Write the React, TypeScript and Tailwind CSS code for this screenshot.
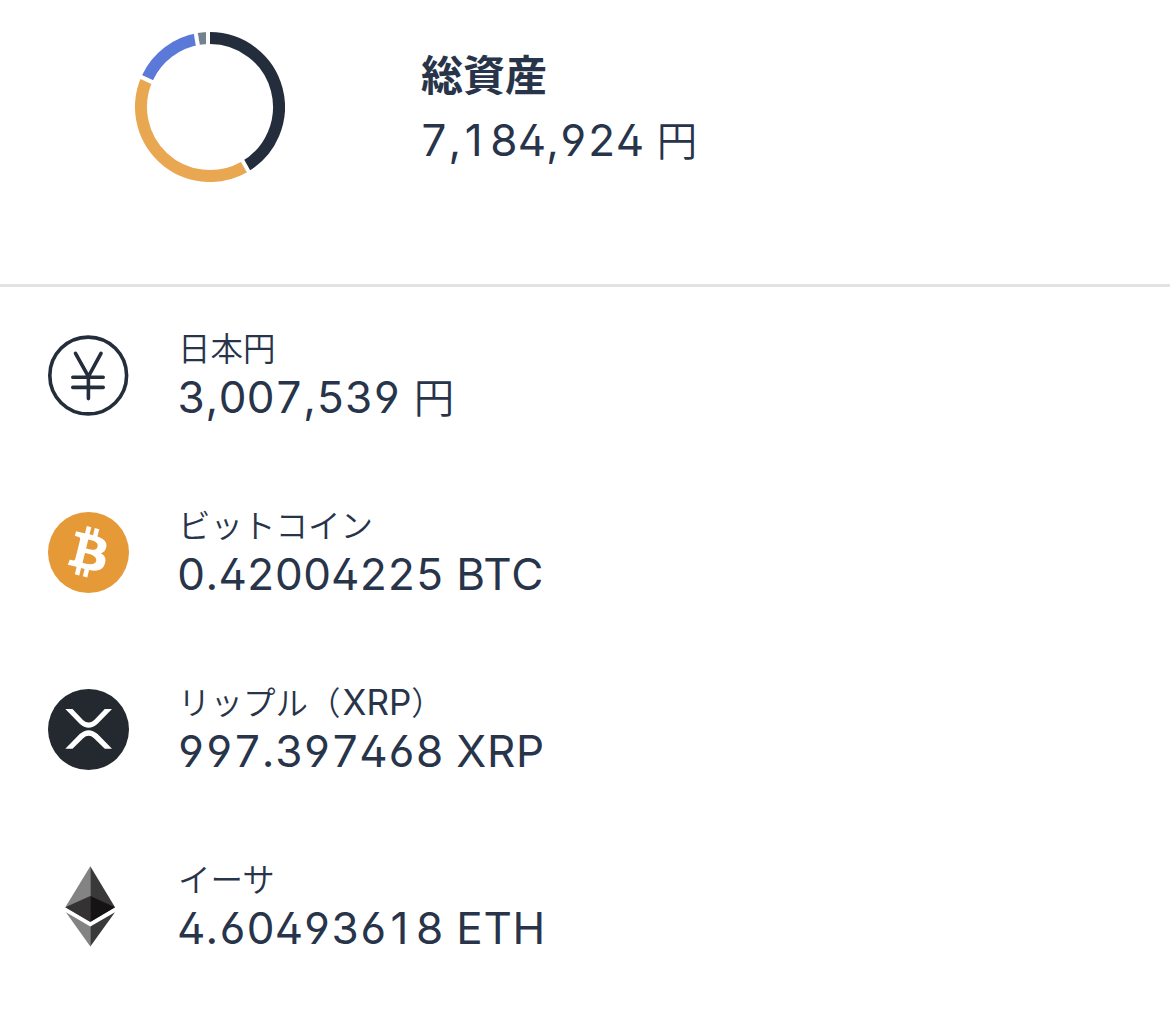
import type { ReactNode } from "react";

const segments = [
  { color: "#242d3c", from: 0, to: 150.7 },
  { color: "#e9a752", from: 150.7, to: 295.1 },
  { color: "#5b79d9", from: 295.1, to: 350.6 },
  { color: "#74828f", from: 350.6, to: 360 },
];

function arc(from: number, to: number) {
  const point = (deg: number) => {
    const a = (deg * Math.PI) / 180;
    return `${75 + 69 * Math.sin(a)} ${75 - 69 * Math.cos(a)}`;
  };
  return `M${point(from)}A69 69 0 0 1 ${point(to)}`;
}

function Donut() {
  return (
    <svg className="h-[150px] w-[150px]" viewBox="0 0 150 150" fill="none">
      {segments.map((s) => (
        <path key={s.color} d={arc(s.from, s.to)} stroke={s.color} strokeWidth="12" />
      ))}
      {segments.map((s) => (
        <rect key={s.from} x="71" y="-1" width="4" height="16" fill="#fff" transform={`rotate(${s.from} 75 75)`} />
      ))}
    </svg>
  );
}

function YenIcon() {
  return (
    <svg className="h-[82px] w-[82px]" viewBox="0 0 82 82" fill="none" stroke="#242d3c" strokeWidth="3.6" strokeLinecap="round">
      <circle cx="40.2" cy="40.5" r="38.4" />
      <path d="M27.5 18.4 40.4 41.5 53 18.4M40.4 41.5V63.6M24.8 42.2H55.2M24.8 52.4H55.2" />
    </svg>
  );
}

function BitcoinIcon() {
  return (
    <svg className="h-[81px] w-[81px]" viewBox="0 0 64 64">
      <circle cx="32" cy="32" r="32" fill="#e59a37" />
      <path
        fill="#fff"
        d="M46.11 27.441c.636-4.258-2.606-6.547-7.039-8.074l1.438-5.768-3.512-.875-1.4 5.616c-.922-.23-1.87-.447-2.812-.662l1.41-5.653-3.509-.875-1.439 5.766c-.764-.174-1.514-.346-2.242-.527l.004-.018-4.842-1.209-.934 3.75s2.605.597 2.55.634c1.422.355 1.68 1.296 1.636 2.042l-1.638 6.571c.098.025.225.061.365.117l-.37-.092-2.297 9.205c-.174.432-.615 1.08-1.609.834.035.051-2.552-.637-2.552-.637l-1.743 4.02 4.57 1.139c.85.213 1.683.436 2.502.646l-1.453 5.835 3.507.875 1.44-5.772c.957.26 1.887.5 2.797.726l-1.434 5.745 3.511.875 1.453-5.823c5.987 1.133 10.49.676 12.383-4.738 1.527-4.36-.075-6.875-3.225-8.516 2.294-.531 4.022-2.04 4.483-5.157zM38.087 38.69c-1.086 4.36-8.426 2.004-10.807 1.412l1.928-7.729c2.38.594 10.011 1.77 8.88 6.317zm1.085-11.312c-.99 3.966-7.1 1.951-9.083 1.457l1.748-7.01c1.983.494 8.367 1.416 7.335 5.553z"
      />
    </svg>
  );
}

function XrpIcon() {
  return (
    <svg className="h-[81px] w-[81px]" viewBox="0 0 81 81">
      <circle cx="40.5" cy="40.5" r="40.5" fill="#23292f" />
      <path
        fill="#fff"
        d="M17.3 20h7.2L35.2 31.2Q40.6 36 46 31.2L56.8 20H64L49.6 34.8Q40.6 42.6 31.7 34.8ZM17.3 59.8h7.2L35.2 49.2Q40.6 44.4 46 49.2L56.8 59.8H64L49.6 45.1Q40.6 37.5 31.7 45.1Z"
      />
    </svg>
  );
}

function EtherIcon() {
  return (
    <svg className="h-[81px] w-[81px]" viewBox="0 0 81 81">
      <path fill="#838383" d="M42.3.3 17.3 41.3 42.3 55.7Z" />
      <path fill="#393939" d="M42.3.3 67 41.3 42.3 55.7Z" />
      <path fill="#343232" d="M42.3 30 17.3 41.3 42.3 55.9Z" />
      <path fill="#161314" d="M42.3 30 67 41.3 42.3 55.9Z" />
      <path fill="#838383" d="M17.9 46.2 42.3 60.4V80.4Z" />
      <path fill="#393939" d="M67 46.2 42.3 60.4V80.4Z" />
    </svg>
  );
}

function Amount({ value, unit }: { value: string; unit: string }) {
  return (
    <p className="flex h-[50px] items-baseline whitespace-pre text-[44px] font-[380] leading-[50px] [font-feature-settings:'cv02','cv03','cv04']">
      {[...value].map((c, i) => (
        <span key={i} className={c === "," || c === "." ? "w-[13.4px] text-center" : c === "1" ? "w-[28.15px] pr-1 text-center" : "w-[28.15px] text-center"}>
          {c}
        </span>
      ))}
      {unit === "円" ? (
        <span className="ml-[13px] text-[40.5px] font-[350] leading-none">円</span>
      ) : (
        <span className="ml-[12.5px] tracking-[0.8px]">{unit}</span>
      )}
    </p>
  );
}

function AssetRow({ icon, label, value, unit }: { icon: ReactNode; label: ReactNode; value: string; unit: string }) {
  return (
    <li className="flex h-[177px] items-start gap-[48px] pl-12">
      <div className="w-[81px] shrink-0">{icon}</div>
      <div className="-mt-2">
        <h2 className="flex h-[45px] items-baseline whitespace-nowrap pl-px text-[32.5px] font-[350] leading-[46px]">{label}</h2>
        <Amount value={value} unit={unit} />
      </div>
    </li>
  );
}

export default function App() {
  return (
    <main className="h-[1028px] w-[1170px] overflow-hidden bg-white font-['Inter','Noto_Sans_CJK_JP',sans-serif] text-[#28344a]">
      <header className="flex h-[287px] border-b-[3px] border-[#e3e3e3] pl-[135px] pt-8">
        <Donut />
        <div className="ml-[135px] pt-[14px]">
          <h1 className="h-[69px] pl-px text-[42px] font-bold leading-[60px]">総資産</h1>
          <Amount value="7,184,924" unit="円" />
        </div>
      </header>
      <ul className="pt-[48px]">
        <AssetRow icon={<YenIcon />} label="日本円" value="3,007,539" unit="円" />
        <AssetRow icon={<BitcoinIcon />} label="ビットコイン" value="0.42004225" unit="BTC" />
        <AssetRow
          icon={<XrpIcon />}
          label={
            <>
              <span>リップル（</span>
              <span className="ml-0.5 text-[35px] font-[380] leading-none">XRP</span>
              <span>）</span>
            </>
          }
          value="997.397468"
          unit="XRP"
        />
        <AssetRow icon={<EtherIcon />} label="イーサ" value="4.60493618" unit="ETH" />
      </ul>
    </main>
  );
}
